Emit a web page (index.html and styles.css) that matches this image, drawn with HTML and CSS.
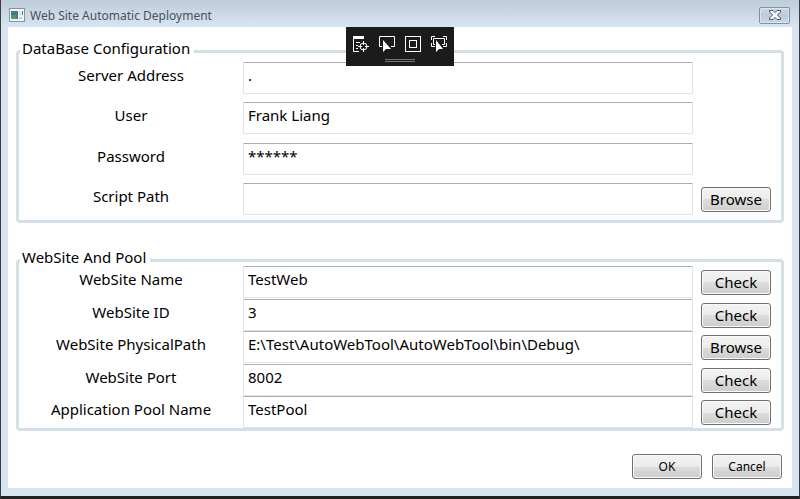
FILE: index.html
```html
<!DOCTYPE html>
<html lang="en">
<head>
  <meta charset="UTF-8" />
  <meta name="viewport" content="width=device-width, initial-scale=1.0"/>
  <title>Web Site Automatic Deployment</title>
  <link rel="stylesheet" href="styles.css">
</head>
<body>

  <div class="window">
    <header class="titlebar">
      <svg class="app-icon" width="16" height="14" viewBox="0 0 16 14">
        <rect x="0.5" y="0.5" width="15" height="13" fill="#f4f6f8" stroke="#8a939c"/>
        <rect x="2" y="3" width="7" height="8" fill="#3d7f86"/>
        <rect x="2" y="7" width="5" height="4" fill="#4d9a6c"/>
        <rect x="10" y="3" width="2" height="5" fill="#dfe3e6"/>
        <rect x="13" y="3" width="1" height="4" fill="#3d7f86"/>
        <rect x="10" y="9" width="3" height="2" fill="#c9ced2"/>
      </svg>
      <h1>Web Site Automatic Deployment</h1>
      <button class="close-btn" aria-label="Close">
        <svg width="12" height="10" viewBox="0 0 12 10">
          <path d="M0.500 0.500h3.500l2 2 2-2h3.500v1.500L8.500 5l3 3v1.500H8l-2-2-2 2H0.500V8l3-3-3-3z" fill="#f5f6f8" stroke="#4d5566"/>
        </svg>
      </button>
    </header>

    <div class="debug-bar">
      <div class="debug-icons">
        <svg width="16" height="16" viewBox="0 0 16 16" fill="none" stroke="#fff">
          <path d="M0 1.500h11" stroke-width="3"/>
          <path d="M0.500 2v13.500H6M3 6.500h4M3 9.500h2M3 12.500h2"/>
          <circle cx="10.500" cy="10.500" r="3.500"/>
          <path d="M10.500 5v4M10.500 12v4M5 10.500h4M12 10.500h4"/>
        </svg>
        <svg width="16" height="16" viewBox="0 0 16 16" fill="none" stroke="#fff">
          <path d="M3 10.500H0.500v-10h15v10H12"/>
          <path d="M4 4v12l3-3h5z" fill="#fff" stroke="none"/>
        </svg>
        <svg width="16" height="16" viewBox="0 0 16 16" fill="none" stroke="#fff">
          <rect x="0.500" y="0.500" width="15" height="15"/>
          <rect x="4.500" y="4.500" width="7" height="7"/>
        </svg>
        <svg width="16" height="16" viewBox="0 0 16 16" fill="none" stroke="#fff">
          <path d="M0.500 4V0.500H4M12 0.500h3.500V4M0.500 7v3.500H4M15.500 7v3.500H12"/>
          <path d="M4 8.500H2.500v-6h11v6H11"/>
          <path d="M5 4v12l3-3h4z" fill="#fff" stroke="none"/>
        </svg>
      </div>
      <div class="grip"></div>
    </div>

    <main class="content">
      <fieldset class="group">
        <legend>DataBase Configuration</legend>
        <div class="rows db-rows">
          <div class="row">
            <label for="server">Server Address</label>
            <input type="text" id="server" value="." />
          </div>
          <div class="row">
            <label for="user">User</label>
            <input type="text" id="user" value="Frank Liang" />
          </div>
          <div class="row">
            <label for="password">Password</label>
            <input type="text" id="password" value="******" />
          </div>
          <div class="row">
            <label for="script">Script Path</label>
            <input type="text" id="script" />
            <button>Browse</button>
          </div>
        </div>
      </fieldset>

      <fieldset class="group">
        <legend>WebSite And Pool</legend>
        <div class="rows site-rows">
          <div class="row">
            <label for="siteName">WebSite Name</label>
            <input type="text" id="siteName" value="TestWeb" />
            <button>Check</button>
          </div>
          <div class="row">
            <label for="siteId">WebSite ID</label>
            <input type="text" id="siteId" value="3" />
            <button>Check</button>
          </div>
          <div class="row">
            <label for="sitePath">WebSite PhysicalPath</label>
            <input type="text" id="sitePath" value="E:\Test\AutoWebTool\AutoWebTool\bin\Debug\" />
            <button>Browse</button>
          </div>
          <div class="row">
            <label for="sitePort">WebSite Port</label>
            <input type="text" id="sitePort" value="8002" />
            <button>Check</button>
          </div>
          <div class="row">
            <label for="poolName">Application Pool Name</label>
            <input type="text" id="poolName" value="TestPool" />
            <button>Check</button>
          </div>
        </div>
      </fieldset>

      <div class="actions">
        <button>OK</button>
        <button>Cancel</button>
      </div>
    </main>
  </div>

</body>
</html>
```
FILE: styles.css
```css
* {
  box-sizing: border-box;
}
body {
  margin: 0;
  font-family: "Noto Sans", "Open Sans", sans-serif;
  font-size: 15px;
  color: #000;
}
.window {
  position: relative;
  display: flex;
  flex-direction: column;
  min-height: 100vh;
  padding: 0 7px 8px;
  background: #d7e4f2;
  border: solid #3c3c40;
  border-width: 0 1px 3px;
  border-bottom-color: #222;
}
.titlebar {
  display: flex;
  align-items: center;
  height: 27px;
  margin: 0 -7px;
  padding: 3px 9px 0 8px;
  background: linear-gradient(#bfcddb, #d7e4f2);
}
.titlebar h1 {
  flex: 1;
  margin: 0 0 0 5px;
  font-size: 12px;
  font-weight: normal;
  color: #4a5158;
}
.close-btn {
  display: flex;
  align-items: center;
  justify-content: center;
  width: 31px;
  height: 17px;
  padding: 0;
  background: linear-gradient(#cbd7e4, #bccbdc 50%, #c9d7e6);
  border: 1px solid #8390a3;
  border-radius: 2px;
  box-shadow: inset 0 0 0 1px #dbe5ef;
}
.debug-bar {
  position: absolute;
  top: 27px;
  left: 50%;
  transform: translateX(-50%);
  width: 108px;
  height: 39px;
  padding: 9px 7px 0;
  background: #1b1b1b;
}
.debug-icons {
  display: flex;
  justify-content: space-between;
}
.debug-icons svg {
  display: block;
}
.grip {
  width: 30px;
  height: 3px;
  margin: 7px auto 0;
  border: solid #777;
  border-width: 1px 0;
}
.content {
  flex: 1;
  padding: 14px 8px 9px;
  background: #fff;
}
.group {
  min-width: 0;
  margin: 0;
  padding: 0 10px 5px 0;
  border: 3px solid #d5dfe6;
  border-radius: 4px;
}
.group + .group {
  margin-top: 27px;
}
.group legend {
  margin-left: 1px;
  padding: 0 4px 6px 2px;
  line-height: 15px;
}
.rows {
  display: grid;
  align-content: space-between;
}
.db-rows {
  min-height: 153px;
}
.site-rows {
  min-height: 162px;
  margin: -5px 0;
}
.row {
  display: grid;
  grid-template-columns: 224px 1fr 78px;
}
.row label {
  line-height: 26px;
  text-align: center;
}
.row input {
  height: 32px;
  min-width: 0;
  padding: 0 4px 6px;
  font: inherit;
  color: #000;
  background: #fff;
  border: 1px solid #e2e3ea;
  border-top-color: #abadb3;
  border-radius: 1px;
}
.row button,
.actions button {
  width: 70px;
  height: 25px;
  padding: 0;
  font: inherit;
  line-height: 23px;
  color: #000;
  background: linear-gradient(#f3f3f3, #ebebeb 50%, #dddddd 50%, #cdcdcd);
  border: 1px solid #707070;
  border-radius: 3px;
  box-shadow: inset 0 0 0 1px #fafafa;
}
.row button {
  margin: 4px 0 0 8px;
}
.actions {
  display: flex;
  justify-content: flex-end;
  gap: 10px;
  margin-top: 23px;
  padding-right: 2px;
}
.actions button {
  font-size: 12px;
}
```
